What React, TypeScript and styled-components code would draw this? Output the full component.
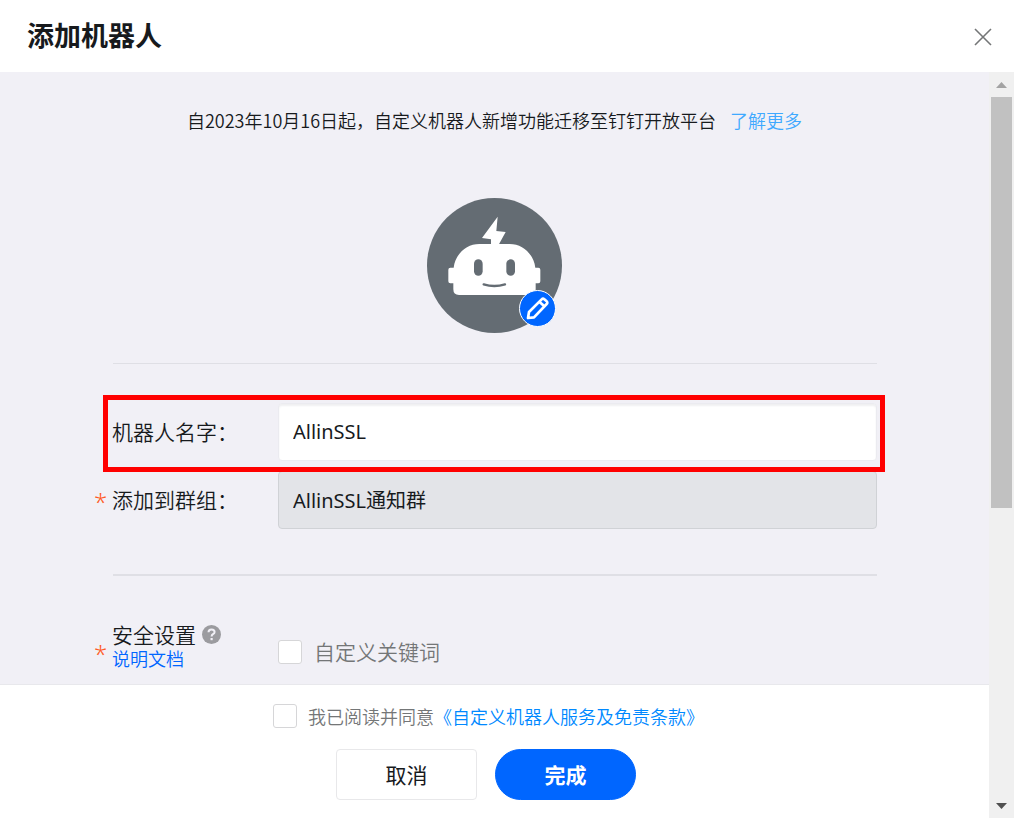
import React, { useState } from "react";
import styled, { createGlobalStyle } from "styled-components";

const GlobalStyle = createGlobalStyle`
  *, *::before, *::after { box-sizing: border-box; }
  body {
    margin: 0;
    background: #ffffff;
    color: #171a1d;
    font-family: "Noto Sans CJK SC", "Noto Sans", sans-serif;
    font-size: 21px;
    font-weight: 350;
  }
  button, input { font: inherit; color: inherit; }
  a { text-decoration: none; }
`;

const Dialog = styled.div`
  display: flex;
  flex-direction: column;
  min-height: 100vh;
`;

const Header = styled.header`
  display: flex;
  align-items: center;
  justify-content: space-between;
  height: 72px;
  padding: 2px 18px 0 27px;
`;

const Title = styled.h1`
  margin: 0;
  padding-bottom: 4px;
  font-size: 27px;
  line-height: 40px;
  font-weight: 700;
`;

const CloseButton = styled.button`
  display: flex;
  align-items: center;
  justify-content: center;
  width: 26px;
  height: 26px;
  padding: 0;
  border: 0;
  background: none;
  color: #747677;
  cursor: pointer;
`;

const Body = styled.div`
  flex: 1;
  display: flex;
`;

const Panel = styled.div`
  flex: 1;
  min-width: 0;
  display: flex;
  flex-direction: column;
`;

const Content = styled.main`
  flex: 1;
  padding: 36px 112px 13px 94px;
  background: #f1f0f6;
`;

const Intro = styled.div`
  display: flex;
  flex-direction: column;
  align-items: center;
  gap: 66px;
  padding-left: 18px;
`;

const Notice = styled.p`
  display: flex;
  gap: 14px;
  margin: 0;
  font-size: 18px;
  line-height: 24px;
  white-space: nowrap;
`;

const Link = styled.a<{ $tone: string }>`
  color: ${(p) => p.$tone};
`;

const Avatar = styled.div`
  position: relative;
  width: 135px;
  height: 135px;

  > svg { display: block; }
`;

const EditButton = styled.button`
  position: absolute;
  right: 6px;
  bottom: 6px;
  width: 37px;
  height: 37px;
  padding: 0;
  border: 1px solid #ffffff;
  border-radius: 50%;
  background: #0066ff;
  cursor: pointer;

  svg { display: block; }
`;

const Divider = styled.hr<{ $weight: number; $above: number; $below: number }>`
  height: ${(p) => p.$weight}px;
  margin: ${(p) => p.$above}px 0 ${(p) => p.$below}px 19px;
  border: 0;
  background: #dfdfe5;
`;

const Fields = styled.div`
  display: flex;
  flex-direction: column;
  gap: 10px;
`;

const Row = styled.div`
  position: relative;
  display: grid;
  grid-template-columns: 18px 166px 1fr;
  align-items: center;
`;

const Highlight = styled.div`
  position: absolute;
  inset: -8px -8px -11px 9px;
  z-index: 1;
  border: 5px solid #ff0000;
  pointer-events: none;
`;

const Required = styled.span`
  height: 38px;
  font-family: "Noto Sans", sans-serif;
  font-size: 24px;
  line-height: 42px;
  color: #ff5b26;
`;

const FieldLabel = styled.label`
  grid-column: 2;
  padding-bottom: 2px;
  line-height: 26px;
`;

const TextInput = styled.input`
  width: 100%;
  height: 58px;
  padding: 0 14px 2px;
  border: 1px solid #ebebf0;
  border-radius: 4px;
  background: #ffffff;
  box-shadow: inset 0 2px 2px #f0f0f2;
  font-family: "Noto Sans", "Noto Sans CJK SC", sans-serif;
  font-size: 20px;
  font-weight: 400;
  outline: none;

  &:read-only {
    border-color: #d0d2d6;
    background: #e3e4e8;
    box-shadow: none;
  }
`;

const SecurityRow = styled(Row)`
  align-items: end;
`;

const SecurityLabel = styled.div`
  display: flex;
  flex-direction: column;
  align-items: flex-start;
  padding-bottom: 2px;
  line-height: 26px;

  a {
    font-size: 18px;
    line-height: 22px;
  }
`;

const LabelLine = styled.span`
  display: flex;
  align-items: center;
  gap: 6px;
`;

const HelpIcon = styled.svg`
  display: block;
`;

const Choice = styled.label`
  display: flex;
  align-items: center;
  gap: 12px;
  height: 38px;
  color: #747677;

  span { padding-bottom: 2px; }
`;

const Checkbox = styled.input`
  appearance: none;
  flex: none;
  width: 24px;
  height: 24px;
  margin: 0;
  border: 1px solid #d6d6d8;
  border-radius: 3px;
  background: #ffffff;

  &:checked {
    border-color: #0066ff;
    background: #0066ff;
  }
`;

const Footer = styled.footer`
  display: flex;
  flex-direction: column;
  gap: 21px;
  padding: 19px 0 18px;
  border-top: 1px solid #e8e8ec;
  background: #ffffff;
`;

const Agreement = styled.div`
  display: flex;
  justify-content: center;
  padding-right: 12px;
  font-size: 18px;
  line-height: 24px;
  color: #747677;
  white-space: nowrap;

  label {
    display: flex;
    gap: 11px;
  }
`;

const Actions = styled.div`
  display: flex;
  justify-content: center;
  gap: 18px;
  padding-right: 17px;
`;

const ActionButton = styled.button<{ $primary?: boolean }>`
  width: 141px;
  height: 51px;
  padding: 0 0 2px;
  border: 1px solid ${(p) => (p.$primary ? "#0066ff" : "#e8e8ea")};
  border-radius: ${(p) => (p.$primary ? "26px" : "4px")};
  background: ${(p) => (p.$primary ? "#0066ff" : "#ffffff")};
  color: ${(p) => (p.$primary ? "#ffffff" : "#171a1d")};
  font-weight: ${(p) => (p.$primary ? 700 : 400)};
  cursor: pointer;
`;

const Scrollbar = styled.div`
  display: flex;
  flex-direction: column;
  width: 25px;
  padding: 0 2px;
  background: #f0f0f0;
`;

const ScrollArrow = styled.svg`
  flex: none;
  display: block;
  width: 21px;
  height: 25px;
`;

const ScrollTrack = styled.div`
  flex: 1;
`;

const ScrollThumb = styled.div`
  height: 59%;
  background: #c1c1c1;
`;

function RobotPicture() {
  return (
    <svg width="135" height="135" viewBox="21 24 405 405" aria-hidden="true">
      <circle cx="223.500" cy="226.500" r="202.500" fill="#646c73" />
      <path d="M233 80 L186 144 L213 148 L213 164 L236 164 L257 126 L229 123 Z" fill="#fff" />
      <path
        d="M178 162 H269 C308 162 341 192 346 233 H355 Q361 233 361 239 V274 Q361 280 355 280 H347 V298 Q347 315 330 315 H117 Q100 315 100 298 V280 H91 Q85 280 85 274 V239 Q85 233 91 233 H101 C106 192 139 162 178 162 Z"
        fill="#fff"
      />
      <rect x="162" y="208" width="26" height="49" rx="13" fill="#646c73" />
      <rect x="259" y="208" width="26" height="49" rx="13" fill="#646c73" />
      <path d="M191 283 Q223 293 255 283" fill="none" stroke="#646c73" strokeWidth="7" strokeLinecap="round" />
    </svg>
  );
}

function PencilPicture() {
  return (
    <svg width="35" height="35" viewBox="0 0 105 105" aria-hidden="true">
      <g fill="none" stroke="#fff" strokeWidth="8" strokeLinejoin="round">
        <path d="M24 81 L27 63 L65 25 Q69 21 73 25 L80 31 Q84 35 80 39 L42 79 Z" />
        <path d="M58 32 L73 46" />
      </g>
    </svg>
  );
}

export default function App() {
  const [name, setName] = useState("AllinSSL");

  return (
    <>
      <GlobalStyle />
      <Dialog role="dialog" aria-labelledby="dialog-title">
        <Header>
          <Title id="dialog-title">添加机器人</Title>
          <CloseButton type="button" aria-label="关闭">
            <svg width="18" height="18" viewBox="0 0 18 18" aria-hidden="true">
              <path d="M1 1 L17 17 M17 1 L1 17" stroke="currentColor" strokeWidth="1.600" />
            </svg>
          </CloseButton>
        </Header>
        <Body>
          <Panel>
            <Content>
              <Intro>
                <Notice>
                  <span>自2023年10月16日起，自定义机器人新增功能迁移至钉钉开放平台</span>
                  <Link href="#more" $tone="#3fa9ff">了解更多</Link>
                </Notice>
                <Avatar>
                  <RobotPicture />
                  <EditButton type="button" aria-label="编辑头像">
                    <PencilPicture />
                  </EditButton>
                </Avatar>
              </Intro>
              <Divider $weight={1} $above={30} $below={39} />
              <Fields>
                <Row>
                  <FieldLabel htmlFor="robot-name">机器人名字：</FieldLabel>
                  <TextInput id="robot-name" value={name} onChange={(e) => setName(e.target.value)} />
                  <Highlight />
                </Row>
                <Row>
                  <Required aria-hidden="true">*</Required>
                  <FieldLabel htmlFor="robot-group">添加到群组：</FieldLabel>
                  <TextInput id="robot-group" value="AllinSSL通知群" readOnly />
                </Row>
              </Fields>
              <Divider $weight={2} $above={45} $below={45} />
              <SecurityRow>
                <Required aria-hidden="true">*</Required>
                <SecurityLabel>
                  <LabelLine>
                    安全设置
                    <HelpIcon width="19" height="19" viewBox="0 0 19 19" aria-hidden="true">
                      <circle cx="9.500" cy="9.500" r="9.500" fill="#9b9b9f" />
                      <path
                        d="M6.500 7.300 Q6.500 4.500 9.500 4.500 Q12.600 4.500 12.600 7 Q12.600 8.300 11 9.200 Q9.600 10 9.600 11.600"
                        fill="none"
                        stroke="#f1f0f6"
                        strokeWidth="2"
                      />
                      <rect x="8.500" y="13" width="2.200" height="2.200" fill="#f1f0f6" />
                    </HelpIcon>
                  </LabelLine>
                  <Link href="#docs" $tone="#0066ff">说明文档</Link>
                </SecurityLabel>
                <Choice>
                  <Checkbox type="checkbox" />
                  <span>自定义关键词</span>
                </Choice>
              </SecurityRow>
            </Content>
            <Footer>
              <Agreement>
                <label>
                  <Checkbox type="checkbox" />
                  我已阅读并同意
                </label>
                <Link href="#terms" $tone="#0089ff">《自定义机器人服务及免责条款》</Link>
              </Agreement>
              <Actions>
                <ActionButton type="button">取消</ActionButton>
                <ActionButton type="button" $primary>完成</ActionButton>
              </Actions>
            </Footer>
          </Panel>
          <Scrollbar aria-hidden="true">
            <ScrollArrow viewBox="0 0 21 25">
              <path d="M5 16 L10.500 10 L16 16 Z" fill="#a3a3a3" />
            </ScrollArrow>
            <ScrollTrack>
              <ScrollThumb />
            </ScrollTrack>
            <ScrollArrow viewBox="0 0 21 25">
              <path d="M5 10 L10.500 16 L16 10 Z" fill="#505050" />
            </ScrollArrow>
          </Scrollbar>
        </Body>
      </Dialog>
    </>
  );
}
